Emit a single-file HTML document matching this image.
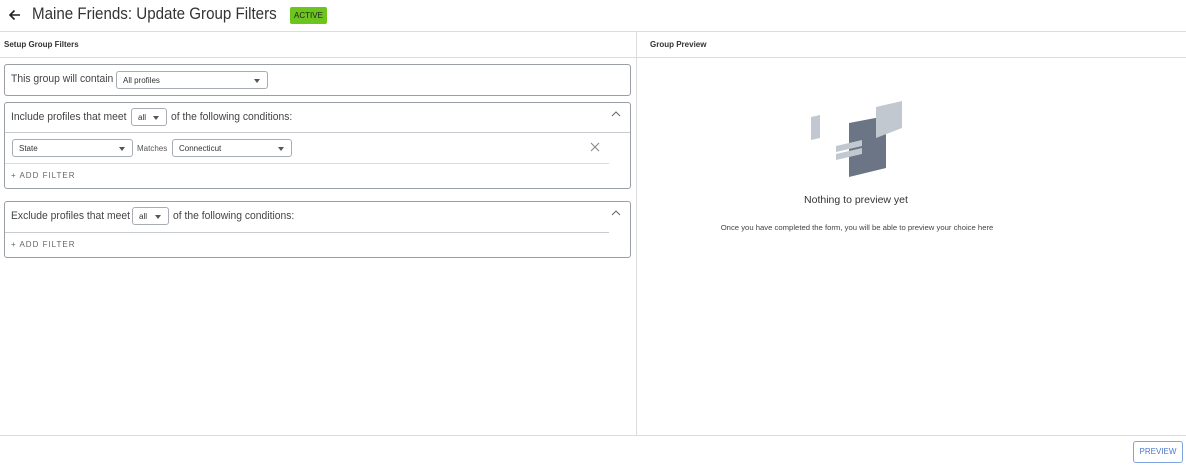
<!DOCTYPE html>
<html><head><style>
*{box-sizing:border-box;margin:0;padding:0}
body{width:1186px;height:466px;background:#fff;font-family:"Liberation Sans",sans-serif;color:#333;position:relative;overflow:hidden}
.a{position:absolute}
.hl{position:absolute;height:1px;background:#dcdcdc}
.box{position:absolute;left:4px;width:627px;border:1px solid #9a9fa6;border-radius:3px}
.sel{position:absolute;border:1px solid #a8adb4;border-radius:3px;font-size:8px;color:#333;padding-left:6px;display:flex;align-items:center;background:#fff}
.sel::after{content:"";position:absolute;right:7px;top:50%;margin-top:-1px;border-left:3.5px solid transparent;border-right:3.5px solid transparent;border-top:4px solid #555}
.lbl{position:absolute;font-size:11px;color:#444;transform:scaleX(0.94);transform-origin:left;white-space:nowrap}
.add{position:absolute;font-size:8px;letter-spacing:1px;color:#666;left:11px}
</style></head><body>
<svg class="a" style="left:8px;top:8px" width="14" height="14" viewBox="0 0 14 14"><path d="M12 7H2M6.5 2.5L2 7l4.5 4.5" stroke="#222" stroke-width="1.6" fill="none"/></svg>
<div class="a" style="left:32px;top:4px;font-size:17px;color:#333;transform:scaleX(0.89);transform-origin:left;white-space:nowrap">Maine Friends: Update Group Filters</div>
<div class="a" style="left:290px;top:7px;width:37px;height:17px;background:#6cc41e;border-radius:2px;font-size:8px;color:#222;text-align:center;line-height:17px">ACTIVE</div>
<div class="hl" style="left:0;top:31px;width:1186px"></div>
<div class="a" style="left:4px;top:40px;font-size:8px;font-weight:bold;color:#333">Setup Group Filters</div>
<div class="a" style="left:650px;top:40px;font-size:8px;font-weight:bold;color:#333">Group Preview</div>
<div class="hl" style="left:0;top:57px;width:1186px"></div>
<div class="a" style="left:636px;top:31px;width:1px;height:404px;background:#dcdcdc"></div>

<div class="box" style="top:64px;height:32px"></div>
<div class="lbl" style="left:11px;top:73px">This group will contain</div>
<div class="sel" style="left:116px;top:71px;width:152px;height:18px">All profiles</div>

<div class="box" style="top:102px;height:87px"></div>
<div class="lbl" style="left:11px;top:111px">Include profiles that meet</div>
<div class="sel" style="left:131px;top:108px;width:36px;height:18px">all</div>
<div class="lbl" style="left:171px;top:111px">of the following conditions:</div>
<svg class="a" style="left:611px;top:111px" width="10" height="6"><path d="M1 5l4-4 4 4" stroke="#666" fill="none"/></svg>
<div class="hl" style="left:5px;top:132px;width:625px;background:#c8ccd1"></div>
<div class="sel" style="left:12px;top:139px;width:121px;height:18px">State</div>
<div class="a" style="left:137px;top:144px;font-size:8px;color:#555">Matches</div>
<div class="sel" style="left:172px;top:139px;width:120px;height:18px">Connecticut</div>
<svg class="a" style="left:590px;top:142px" width="10" height="10"><path d="M1 1l8 8M9 1l-8 8" stroke="#888" stroke-width="1.1"/></svg>
<div class="hl" style="left:5px;top:163px;width:604px"></div>
<div class="add" style="top:171px">+ ADD FILTER</div>

<div class="box" style="top:201px;height:57px"></div>
<div class="lbl" style="left:11px;top:210px">Exclude profiles that meet</div>
<div class="sel" style="left:132px;top:207px;width:37px;height:18px">all</div>
<div class="lbl" style="left:173px;top:210px">of the following conditions:</div>
<svg class="a" style="left:611px;top:210px" width="10" height="6"><path d="M1 5l4-4 4 4" stroke="#666" fill="none"/></svg>
<div class="hl" style="left:5px;top:232px;width:604px;background:#c8ccd1"></div>
<div class="add" style="top:240px">+ ADD FILTER</div>

<svg class="a" style="left:0;top:0" width="1186" height="466">
<polygon points="811,117 820,115 820,138 811,140" fill="#c2c8d0"/>
<polygon points="849,123 886,116 886,168 849,177" fill="#6b7585"/>
<polygon points="876,107 902,101 902,128 876,138" fill="#c2c8d0"/>
<polygon points="836,146 862,140 862,146 836,152" fill="#c2c8d0"/>
<polygon points="836,154 862,148 862,154 836,160" fill="#c2c8d0"/>
</svg>
<div class="a" style="left:636px;top:194px;width:440px;text-align:center;font-size:10.5px;color:#333">Nothing to preview yet</div>
<div class="a" style="left:636px;top:223px;width:442px;text-align:center;font-size:7.7px;color:#444">Once you have completed the form, you will be able to preview your choice here</div>

<div class="hl" style="left:0;top:435px;width:1186px"></div>
<div class="a" style="left:1133px;top:441px;width:50px;height:22px;border:1px solid #7fa4e0;border-radius:3px;font-size:8px;color:#4a78c8;text-align:center;line-height:20px">PREVIEW</div>
</body></html>
